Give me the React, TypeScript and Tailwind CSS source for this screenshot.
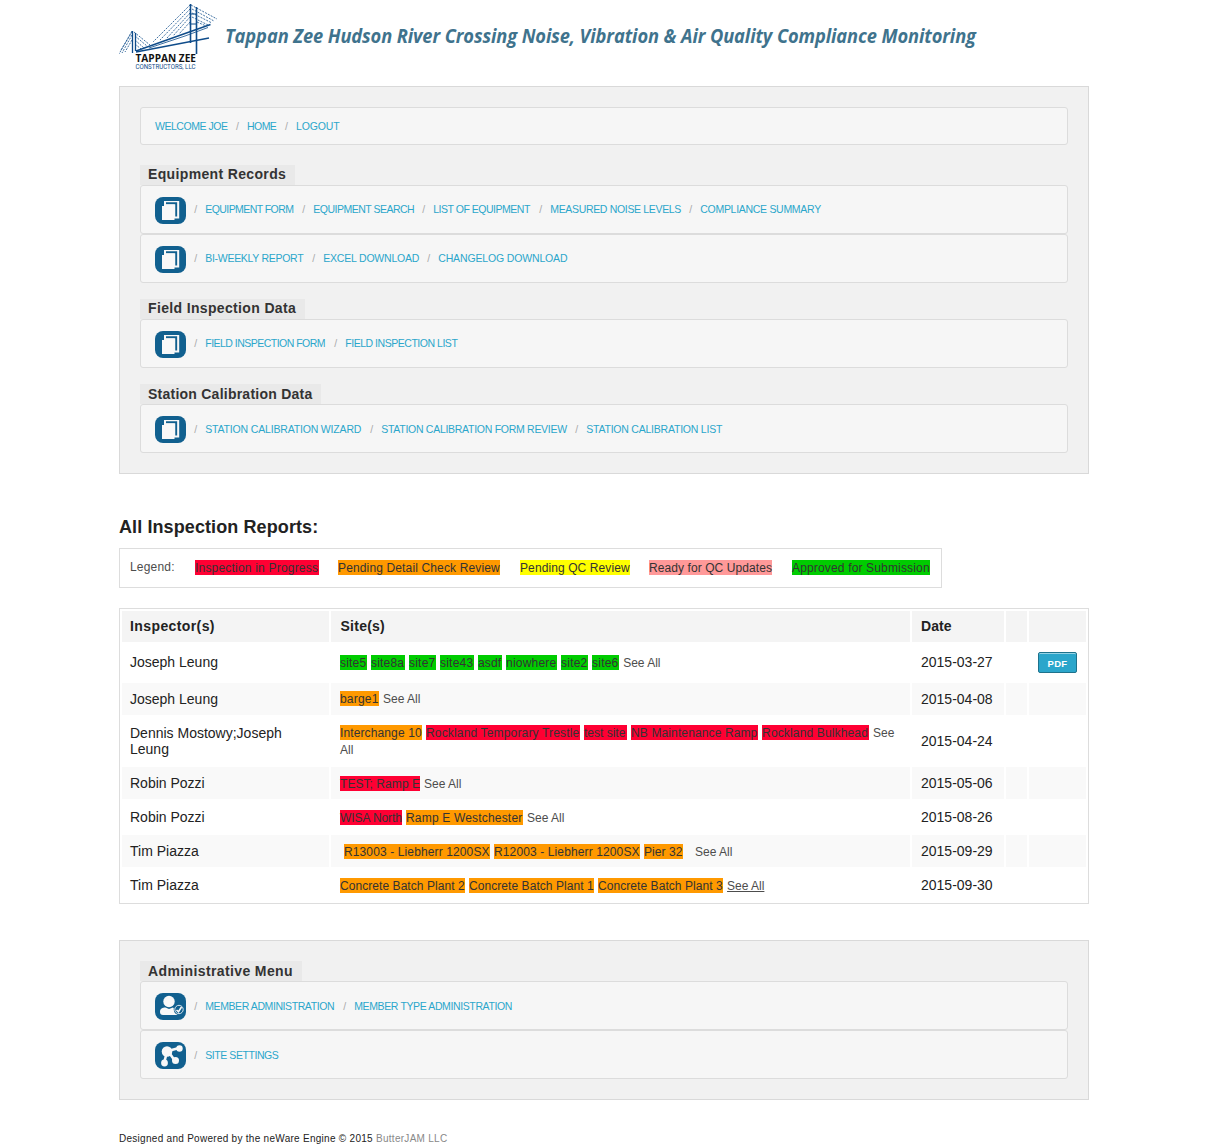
import type { ReactNode } from "react";
import clsx from "clsx";

type Status = "progress" | "detail" | "qc" | "ready" | "approved";

interface Site {
  name: string;
  status: Status;
  size: string;
}

interface Report {
  inspector: string;
  date: string;
  sites: Site[];
  height: string;
  pdf?: boolean;
  raised?: boolean;
  spaced?: boolean;
  active?: boolean;
}

interface NavLink {
  label: string;
  size: string;
}

const statusColor: Record<Status, string> = {
  progress: "bg-[#ff0033]",
  detail: "bg-[#ff9900]",
  qc: "bg-[#ffff00]",
  ready: "bg-[#ff9999]",
  approved: "bg-[#00cc00]",
};

const legend: Site[] = [
  { name: "Inspection in Progress", status: "progress", size: "w-[124px] mr-[19px] tracking-[0.2px]" },
  { name: "Pending Detail Check Review", status: "detail", size: "w-[162px] mr-[20px] tracking-[0.14px]" },
  { name: "Pending QC Review", status: "qc", size: "w-[110px] mr-[19px] tracking-[0.1px]" },
  { name: "Ready for QC Updates", status: "ready", size: "w-[123px] mr-[20px] tracking-[0.08px]" },
  { name: "Approved for Submission", status: "approved", size: "w-[138px] tracking-[0.16px]" },
];

const reports: Report[] = [
  {
    inspector: "Joseph Leung",
    date: "2015-03-27",
    height: "h-[37px]",
    pdf: true,
    sites: [
      { name: "site5", status: "approved", size: "w-[27px] tracking-[0.2px]" },
      { name: "site8a", status: "approved", size: "w-[34px] tracking-[0.2px]" },
      { name: "site7", status: "approved", size: "w-[27px] tracking-[0.2px]" },
      { name: "site43", status: "approved", size: "w-[34px] tracking-[0.2px]" },
      { name: "asdf", status: "approved", size: "w-[24px] tracking-[0.1px]" },
      { name: "niowhere", status: "approved", size: "w-[51px] tracking-[0.2px]" },
      { name: "site2", status: "approved", size: "w-[27px] tracking-[0.2px]" },
      { name: "site6", status: "approved", size: "w-[27px] tracking-[0.2px]" },
    ],
  },
  {
    inspector: "Joseph Leung",
    date: "2015-04-08",
    height: "h-[32px]",
    raised: true,
    sites: [{ name: "barge1", status: "detail", size: "w-[39px] tracking-[0.2px]" }],
  },
  {
    inspector: "Dennis Mostowy;Joseph Leung",
    date: "2015-04-24",
    height: "h-[48px]",
    sites: [
      { name: "Interchange 10", status: "detail", size: "w-[82px] tracking-[0.12px]" },
      { name: "Rockland Temporary Trestle", status: "progress", size: "w-[154px] tracking-[0.16px]" },
      { name: "test site", status: "progress", size: "w-[43px]" },
      { name: "NB Maintenance Ramp", status: "progress", size: "w-[127px] tracking-[0.12px]" },
      { name: "Rockland Bulkhead", status: "progress", size: "w-[107px] tracking-[0.15px]" },
    ],
  },
  {
    inspector: "Robin Pozzi",
    date: "2015-05-06",
    height: "h-[32px]",
    sites: [{ name: "TEST; Ramp E", status: "progress", size: "w-[80px] tracking-[0.06px]" }],
  },
  {
    inspector: "Robin Pozzi",
    date: "2015-08-26",
    height: "h-[32px]",
    sites: [
      { name: "WISA North", status: "progress", size: "w-[62px] tracking-[-0.08px]" },
      { name: "Ramp E Westchester", status: "detail", size: "w-[117px] tracking-[0.18px]" },
    ],
  },
  {
    inspector: "Tim Piazza",
    date: "2015-09-29",
    height: "h-[32px]",
    spaced: true,
    sites: [
      { name: "R13003 - Liebherr 1200SX", status: "detail", size: "w-[146px] tracking-[0.12px]" },
      { name: "R12003 - Liebherr 1200SX", status: "detail", size: "w-[146px] tracking-[0.12px]" },
      { name: "Pier 32", status: "detail", size: "w-[39px] tracking-[0.08px]" },
    ],
  },
  {
    inspector: "Tim Piazza",
    date: "2015-09-30",
    height: "h-[32px]",
    active: true,
    sites: [
      { name: "Concrete Batch Plant 2", status: "detail", size: "w-[125px] tracking-[0.06px]" },
      { name: "Concrete Batch Plant 1", status: "detail", size: "w-[125px] tracking-[0.06px]" },
      { name: "Concrete Batch Plant 3", status: "detail", size: "w-[125px] tracking-[0.06px]" },
    ],
  },
];

function Logo() {
  return (
    <svg width="106" height="76" viewBox="0 0 106 76" className="block shrink-0">
      <g stroke="#0f4c8a" fill="none">
        <path d="M71.5 4v39M77.5 7v47" strokeWidth="1.6" />
        <path d="M70.5 14h7M70.5 24h7" strokeWidth="1" />
        <path d="M13.5 31v22M16.5 33v18" strokeWidth="1.3" />
        <path d="M17 51 66 33.5 91.500 24.500" strokeWidth="1.4" />
        <path d="M17 52 90 38" strokeWidth="1.4" />
        <path d="M30 48 66 36 89 27.500" strokeWidth="0.8" />
        <g strokeWidth="0.8" strokeDasharray="2 1.200">
          <path d="M71 5 34 42M71 9 41 40M71 13 48 38M71 17 54 36M71 22 60 34" />
          <path d="M72 5 98 19M73 9 95 21M73 13 93 23M73 17 89 25M78 22 87 26" />
          <path d="M13 31 0 54M13 35 3 53M13 40 6 52M13 32 2 50" />
          <path d="M15 32 31 45M16 36 28 46M16 40 25 48M16 44 22 49" />
        </g>
      </g>
      <text x="16.500" y="61.500" fontSize="10" fontWeight="700" fontFamily="Open Sans, sans-serif" textLength="60.500" lengthAdjust="spacingAndGlyphs" fill="#111">
        TAPPAN ZEE
      </text>
      <text x="16.500" y="69" fontSize="7.500" fontFamily="Roboto, sans-serif" textLength="60" lengthAdjust="spacingAndGlyphs" fill="#0f4c8a">
        CONSTRUCTORS, LLC
      </text>
    </svg>
  );
}

function IconTile({ children }: { children: ReactNode }) {
  return (
    <svg width="31" height="27" viewBox="0 0 31 27" className="block shrink-0">
      <rect width="31" height="27" rx="8" fill="#11608f" />
      {children}
    </svg>
  );
}

function DocumentIcon() {
  return (
    <IconTile>
      <path d="M9 4H24.200V21.500H19V8H9Z" fill="#f8f8f8" />
      <path d="M11 6.300H21.200V19.500" fill="none" stroke="#11608f" strokeWidth="1.900" />
      <path d="M9 7.500H19.500V23H7V9H9Z" fill="#f8f8f8" />
    </IconTile>
  );
}

function MemberIcon() {
  return (
    <IconTile>
      <circle cx="14" cy="8.500" r="5.700" fill="#f8f8f8" />
      <path d="M5 19C5 15.500 7.500 14.500 10.500 14.500L14 16L18 14.500C20 16 20 20 23 22H8C6 22 5 21 5 19Z" fill="#f8f8f8" />
      <circle cx="24" cy="16.500" r="5.300" fill="#11608f" />
      <circle cx="24" cy="16.500" r="4.200" fill="none" stroke="#d8e5ee" strokeWidth="1" />
      <path d="M21.500 17 23.500 18.700 26.500 14" fill="none" stroke="#f8f8f8" strokeWidth="1.600" />
    </IconTile>
  );
}

function ShareIcon() {
  return (
    <IconTile>
      <path d="M13 9 24 6M13 9 20 19M12 10 9 21" stroke="#f8f8f8" strokeWidth="2.600" />
      <circle cx="12" cy="9.500" r="5.300" fill="#f8f8f8" />
      <circle cx="24.500" cy="6.500" r="3.200" fill="#f8f8f8" />
      <circle cx="20.500" cy="18.500" r="3.500" fill="#f8f8f8" />
      <circle cx="9.500" cy="21" r="3.400" fill="#f8f8f8" />
    </IconTile>
  );
}

function Slash() {
  return <span className="w-[19.25px] shrink-0 text-center text-[#aaaaaa]">/</span>;
}

function NavBar({
  icon,
  links,
  lowered,
}: {
  icon?: ReactNode;
  links: NavLink[];
  lowered?: boolean;
}) {
  return (
    <nav
      className={clsx(
        "flex items-center rounded-[3px] border border-[#dcdcdc] bg-[#f6f6f6] pl-[14px] text-[10.5px] leading-[15px] text-[#2ba6cb]",
        icon ? "h-[49px]" : "h-[38px]"
      )}
    >
      {icon && <div className="pt-[2px]">{icon}</div>}
      {links.map((link, i) => (
        <div key={link.label} className={clsx("flex", lowered && "pt-[2px]")}>
          {(icon || i > 0) && <Slash />}
          <a href="#" className={clsx("block whitespace-nowrap", link.size)}>
            {link.label}
          </a>
        </div>
      ))}
    </nav>
  );
}

function MenuTitle({ children, size }: { children: ReactNode; size: string }) {
  return (
    <h3
      className={clsx(
        "h-5 whitespace-nowrap bg-[#e9e9e9] pl-2 text-[14px] font-bold text-[#333333]",
        size
      )}
    >
      {children}
    </h3>
  );
}

function Chip({ site }: { site: Site }) {
  return (
    <span
      className={clsx(
        "inline-block h-[15px] whitespace-nowrap leading-[16px] text-[#333333]",
        statusColor[site.status],
        site.size
      )}
    >
      {site.name}
    </span>
  );
}

function ReportRow({ report, striped }: { report: Report; striped: boolean }) {
  return (
    <tr className={clsx(report.height, striped && "[&>td]:bg-[#f9f9f9]")}>
      <td className={clsx("px-2 pt-0 leading-4", report.pdf ? "pb-px" : "pb-0")}>
        {report.inspector}
      </td>
      <td
        className={clsx(
          "px-[9px] pb-0 text-[12px] leading-[17px] text-[#4d4d4d]",
          report.raised ? "pt-0" : "pt-[2px]"
        )}
      >
        {report.spaced && <span className="inline-block w-1" />}
        {report.sites.map((site) => (
          <span key={site.name}>
            <Chip site={site} />
            <span className="tracking-[0.67px]"> </span>
          </span>
        ))}
        {report.spaced && <span className="inline-block w-2" />}
        <a href="#" className={clsx(report.active && "underline underline-offset-1")}>
          See All
        </a>
      </td>
      <td className={clsx("px-[9px] pt-0", report.pdf ? "pb-px" : "pb-0")}>{report.date}</td>
      <td />
      <td className="p-0 pl-[9px]">
        {report.pdf && (
          <button className="block h-[21px] w-[39px] rounded-[2px] border border-[#1e728c] bg-[#2ba6cb] pt-px text-center text-[9.5px] leading-[20px] font-bold tracking-[0.3px] text-white shadow-[inset_0_1px_0_rgba(255,255,255,0.5)]">
            PDF
          </button>
        )}
      </td>
    </tr>
  );
}

function App() {
  return (
    <div className="h-[1145px] overflow-hidden bg-white font-['Liberation_Sans',Arial,sans-serif] text-[#222222]">
      <div className="ml-[119px] w-[970px]">
        <header className="flex h-[86px] items-start">
          <Logo />
          <h1 className="mt-[22px] origin-left scale-x-[0.914] whitespace-nowrap font-['Open_Sans',sans-serif] text-[20px] leading-[28px] font-bold italic tracking-[-0.12px] text-[#3f738d]">
            Tappan Zee Hudson River Crossing Noise, Vibration &amp; Air Quality Compliance Monitoring
          </h1>
        </header>

        <section className="h-[388px] border border-[#d9d9d9] bg-[#f1f1f1] p-5">
          <NavBar
            links={[
              { label: "WELCOME JOE", size: "w-[72.75px] tracking-[-0.46px]" },
              { label: "HOME", size: "w-[29.75px] tracking-[-0.55px]" },
              { label: "LOGOUT", size: "w-[44px] tracking-[-0.15px]" },
            ]}
          />
          <div className="mt-5">
            <MenuTitle size="w-[155px] leading-[19px] tracking-[0.35px]">Equipment Records</MenuTitle>
            <NavBar
              icon={<DocumentIcon />}
              links={[
                { label: "EQUIPMENT FORM", size: "w-[88.75px] tracking-[-0.57px]" },
                { label: "EQUIPMENT SEARCH", size: "w-[100.75px] tracking-[-0.5px]" },
                { label: "LIST OF EQUIPMENT", size: "w-[97.75px] tracking-[-0.48px]" },
                { label: "MEASURED NOISE LEVELS", size: "w-[130.75px] tracking-[-0.33px]" },
                { label: "COMPLIANCE SUMMARY", size: "w-[121px] tracking-[-0.29px]" },
              ]}
            />
            <NavBar
              icon={<DocumentIcon />}
              links={[
                { label: "BI-WEEKLY REPORT", size: "w-[98.75px] tracking-[-0.29px]" },
                { label: "EXCEL DOWNLOAD", size: "w-[95.75px] tracking-[-0.2px]" },
                { label: "CHANGELOG DOWNLOAD", size: "w-[130px] tracking-[-0.15px]" },
              ]}
            />
          </div>
          <div className="mt-4">
            <MenuTitle size="w-[165px] leading-[19px] tracking-[0.35px]">Field Inspection Data</MenuTitle>
            <NavBar
              icon={<DocumentIcon />}
              links={[
                { label: "FIELD INSPECTION FORM", size: "w-[120.75px] tracking-[-0.52px]" },
                { label: "FIELD INSPECTION LIST", size: "w-[113px] tracking-[-0.47px]" },
              ]}
            />
          </div>
          <div className="mt-4">
            <MenuTitle size="w-[181px] leading-[21px] tracking-[0.24px]">Station Calibration Data</MenuTitle>
            <NavBar
              lowered
              icon={<DocumentIcon />}
              links={[
                { label: "STATION CALIBRATION WIZARD", size: "w-[156.75px] tracking-[-0.17px]" },
                { label: "STATION CALIBRATION FORM REVIEW", size: "w-[185.75px] tracking-[-0.28px]" },
                { label: "STATION CALIBRATION LIST", size: "w-[137px] tracking-[-0.22px]" },
              ]}
            />
          </div>
        </section>

        <h2 className="mt-10 h-[34px] text-[18px] leading-[26px] font-bold tracking-[0.1px]">
          All Inspection Reports:
        </h2>

        <div className="flex h-10 w-[823px] border border-[#dddddd] pt-[11px] pl-[10px] text-[12px] text-[#4d4d4d]">
          <span className="w-[65px] leading-[14px] tracking-[0.2px]">Legend:</span>
          {legend.map((item) => (
            <Chip key={item.name} site={item} />
          ))}
        </div>

        <table className="mt-5 w-[970px] table-fixed border-separate border-spacing-[2px] border border-[#dddddd] text-[14px] leading-[18px]">
          <colgroup>
            <col className="w-[207px]" />
            <col className="w-[579px]" />
            <col className="w-[92px]" />
            <col className="w-[21px]" />
            <col className="w-[57px]" />
          </colgroup>
          <thead>
            <tr className="h-[31px] text-left [&>th]:bg-[#f4f4f4] [&>th]:pt-0 [&>th]:pb-px">
              <th className="px-2 tracking-[0.4px]">Inspector(s)</th>
              <th className="px-[9.5px] tracking-[0.25px]">Site(s)</th>
              <th className="px-[9px] tracking-[0.1px]">Date</th>
              <th />
              <th />
            </tr>
          </thead>
          <tbody>
            {reports.map((report, i) => (
              <ReportRow key={report.date} report={report} striped={i % 2 === 1} />
            ))}
          </tbody>
        </table>

        <section className="mt-9 h-[160px] border border-[#d9d9d9] bg-[#f1f1f1] p-5">
          <MenuTitle size="w-[162px] leading-[21px] tracking-[0.38px]">Administrative Menu</MenuTitle>
          <NavBar
            lowered
            icon={<MemberIcon />}
            links={[
              { label: "MEMBER ADMINISTRATION", size: "w-[129.75px] tracking-[-0.41px]" },
              { label: "MEMBER TYPE ADMINISTRATION", size: "w-[159px] tracking-[-0.38px]" },
            ]}
          />
          <NavBar
            lowered
            icon={<ShareIcon />}
            links={[{ label: "SITE SETTINGS", size: "w-[74px] tracking-[-0.43px]" }]}
          />
        </section>

        <footer className="mt-8 text-[10px] leading-[13px] tracking-[0.28px]">
          Designed and Powered by the neWare Engine © 2015{" "}
          <a href="#" className="text-[#888888]">ButterJAM LLC</a>
        </footer>
      </div>
    </div>
  );
}

export default App;
